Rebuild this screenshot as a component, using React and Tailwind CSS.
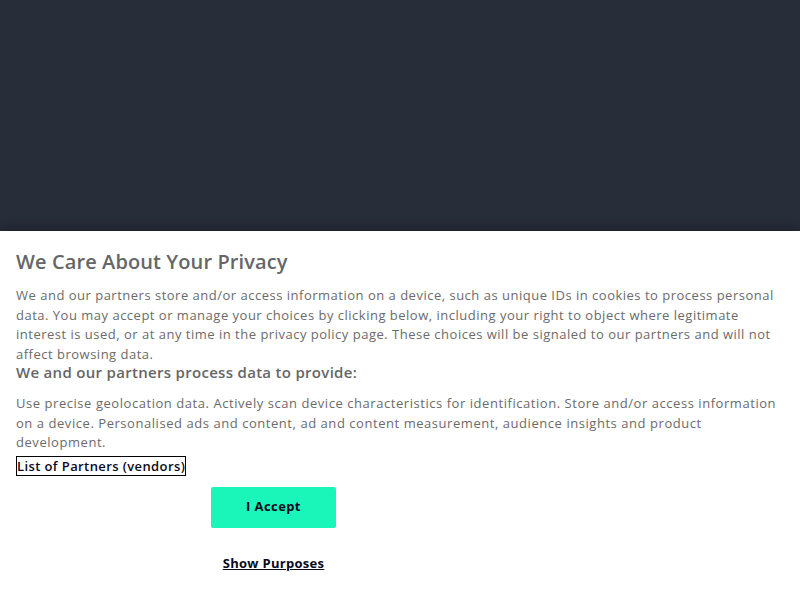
export default function App() {
  return (
    <div
      className="w-[800px] h-[600px] flex flex-col bg-[#282d3a] overflow-hidden"
      style={{ fontFamily: '"Open Sans", "Liberation Sans", sans-serif' }}
    >
      <div className="h-[231px] shrink-0" />
      <div className="flex-1 bg-white px-4 pt-[17px] shadow-[0_-4px_10px_rgba(0,0,0,0.25)]">
        <h2 className="text-[20px] leading-[28px] font-semibold text-[#666666] tracking-[0.1px]">
          We Care About Your Privacy
        </h2>
        <p className="mt-[10px] text-[13px] leading-[19.5px] text-[#6b6b6b] tracking-[0.5px] whitespace-nowrap">
          We and our partners store and/or access information on a device, such as unique IDs in cookies to process personal
          <br />
          data. You may accept or manage your choices by clicking below, including your right to object where legitimate
          <br />
          interest is used, or at any time in the privacy policy page. These choices will be signaled to our partners and will not
          <br />
          affect browsing data.
        </p>
        <h3 className="-mt-[2px] text-[15px] leading-[20px] font-semibold text-[#666666] tracking-[0.3px]">
          We and our partners process data to provide:
        </h3>
        <p className="mt-[12px] text-[13px] leading-[19.5px] text-[#6b6b6b] tracking-[0.55px] whitespace-nowrap">
          Use precise geolocation data. Actively scan device characteristics for identification. Store and/or access information
          <br />
          on a device. Personalised ads and content, ad and content measurement, audience insights and product
          <br />
          development.
        </p>
        <div>
          <span className="inline-block border border-black text-[13px] leading-[18px] font-semibold text-[#0a0a1e] tracking-[0.4px]">
            List of Partners (vendors)
          </span>
        </div>
        <div className="w-[515px] flex flex-col items-center">
          <button className="mt-[10px] w-[125px] h-[41px] rounded-[2px] bg-[#1af5b9] text-[13px] font-bold text-[#0a0a1e] tracking-[0.4px]">
            I Accept
          </button>
          <button className="mt-[26px] text-[13px] font-bold text-[#0a0a1e] underline tracking-[0.3px]">
            Show Purposes
          </button>
        </div>
      </div>
    </div>
  );
}
